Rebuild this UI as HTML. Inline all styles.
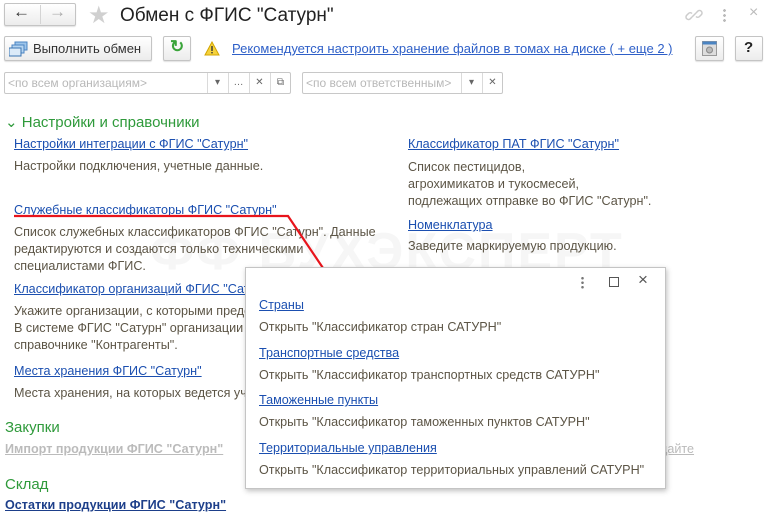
<!DOCTYPE html>
<html><head><meta charset="utf-8"><style>
*{margin:0;padding:0;box-sizing:border-box}
body{width:768px;height:518px;overflow:hidden;background:#fff;font-family:"Liberation Sans",Arial,sans-serif;position:relative;font-size:12.6px;color:#333}
.a{position:absolute;white-space:nowrap}
.lk{color:#1b4fb0;text-decoration:underline}
.d{color:#5c5546}
.g{color:#2f9a3b;font-size:15px}
.btn{position:absolute;border:1px solid #c4c4c4;border-radius:2px;background:linear-gradient(#fff,#ececec);box-shadow:0 1px 1px rgba(0,0,0,.12)}
.in{position:absolute;border:1px solid #c8c8c8;border-radius:2px;background:#fff;height:22px}
.ph{color:#b8b8b8;font-size:12px}
.cell{position:absolute;top:0;height:20px;border-left:1px solid #dadada;color:#666;font-size:10px;text-align:center;line-height:20px;width:20px}
</style></head><body>
<div class="a" style="left:150px;top:222px;font-size:52px;font-weight:bold;color:#f6f6f6;letter-spacing:2px">ФФ БУХЭКСПЕРТ</div>

<div class="btn" style="left:4px;top:3px;width:72px;height:23px"></div>
<div class="a" style="left:40px;top:5px;height:19px;border-left:1px solid #d4d4d4"></div>
<div class="a" style="left:13px;top:2px;font-size:17px;color:#333;font-weight:bold">&#8592;</div>
<div class="a" style="left:49px;top:2px;font-size:17px;color:#aaa;font-weight:bold">&#8594;</div>
<div class="a" style="left:88px;top:1px;font-size:24px;color:#d0d0d0">&#9733;</div>
<div class="a" style="left:120px;top:5px;font-size:19px;color:#222">Обмен с ФГИС "Сатурн"</div>
<svg class="a" style="left:684px;top:5px" width="20" height="20" viewBox="0 0 20 20"><g fill="none" stroke="#ccc" stroke-width="1.5"><path d="M8 12l-2 2a2.5 2.5 0 0 1-3.5-3.5l2-2a2.5 2.5 0 0 1 3.5 0"/><path d="M12 8l2-2a2.5 2.5 0 0 1 3.5 3.5l-2 2a2.5 2.5 0 0 1-3.5 0"/><path d="M8 12l4-4"/></g></svg>
<div class="a" style="left:723px;top:8px;width:3px;height:14px;background:radial-gradient(circle,#bbb 1.3px,transparent 1.5px) 0 0/3px 5px"></div>
<div class="a" style="left:749px;top:4px;font-size:16px;color:#bbb">×</div>

<div class="btn" style="left:4px;top:36px;width:148px;height:25px"></div>
<svg class="a" style="left:9px;top:41px" width="20" height="16"><rect x="6" y="1" width="12" height="8" fill="#9cc4ea" stroke="#4a84c2"/><rect x="3" y="4" width="12" height="8" fill="#b5d4f0" stroke="#4a84c2"/><rect x="0" y="7" width="12" height="8" fill="#dbeaf8" stroke="#3a74b2"/></svg>
<div class="a" style="left:33px;top:41px;font-size:13px;color:#333">Выполнить обмен</div>
<div class="btn" style="left:163px;top:36px;width:28px;height:25px"></div>
<div class="a" style="left:170px;top:37px;font-size:17px;color:#3aa43a;font-weight:bold">&#8635;</div>
<svg class="a" style="left:204px;top:41px" width="16" height="15"><path d="M8 1L15 14H1z" fill="#f5d23c" stroke="#d3a500"/><rect x="7.3" y="5" width="1.4" height="5" fill="#333"/><rect x="7.3" y="11" width="1.4" height="1.4" fill="#333"/></svg>
<div class="a lk" style="left:232px;top:41px;font-size:13px;color:#2f60c8">Рекомендуется настроить хранение файлов в томах на диске ( + еще 2 )</div>
<div class="btn" style="left:695px;top:36px;width:29px;height:25px"></div>
<svg class="a" style="left:702px;top:41px" width="15" height="15"><rect x="0.5" y="0.5" width="14" height="14" fill="#ddd" stroke="#999"/><rect x="0.5" y="0.5" width="14" height="3" fill="#4a84c2"/><circle cx="7.5" cy="9" r="3" fill="#bbb" stroke="#888"/></svg>
<div class="btn" style="left:735px;top:36px;width:28px;height:25px"></div>
<div class="a" style="left:744px;top:39px;font-size:15px;color:#222;font-weight:bold">?</div>

<div class="in" style="left:4px;top:72px;width:287px"><div class="a ph" style="left:3px;top:3px">&lt;по всем организациям&gt;</div>
<div class="cell" style="left:202px">▾</div><div class="cell" style="left:223px">…</div><div class="cell" style="left:244px">✕</div><div class="cell" style="left:265px">⧉</div></div>
<div class="in" style="left:302px;top:72px;width:201px"><div class="a ph" style="left:3px;top:3px">&lt;по всем ответственным&gt;</div>
<div class="cell" style="left:158px">▾</div><div class="cell" style="left:179px">✕</div></div>

<div class="a g" style="left:5px;top:113px">⌄ Настройки и справочники</div>
<div class="a lk" style="left:14px;top:137px">Настройки интеграции с ФГИС "Сатурн"</div>
<div class="a d" style="left:14px;top:159px">Настройки подключения, учетные данные.</div>
<div class="a lk" style="left:14px;top:203px">Служебные классификаторы ФГИС "Сатурн"</div>
<div class="a d" style="left:14px;top:224px;line-height:17px">Список служебных классификаторов ФГИС "Сатурн". Данные<br>редактируются и создаются только техническими<br>специалистами ФГИС.</div>
<div class="a lk" style="left:14px;top:282px">Классификатор организаций ФГИС "Сатурн"</div>
<div class="a d" style="left:14px;top:303px;line-height:17px">Укажите организации, с которыми предстоит работать.<br>В системе ФГИС "Сатурн" организации хранятся в<br>справочнике "Контрагенты".</div>
<div class="a lk" style="left:14px;top:364px">Места хранения ФГИС "Сатурн"</div>
<div class="a d" style="left:14px;top:386px">Места хранения, на которых ведется учет.</div>
<div class="a g" style="left:5px;top:419px">Закупки</div>
<div class="a" style="left:5px;top:442px;color:#bbb;text-decoration:underline;font-weight:bold">Импорт продукции ФГИС "Сатурн"</div>
<div class="a" style="left:660px;top:442px;color:#bbb;text-decoration:underline">дайте</div>
<div class="a g" style="left:5px;top:476px">Склад</div>
<div class="a" style="left:5px;top:498px;color:#1d3f8a;text-decoration:underline;font-weight:bold">Остатки продукции ФГИС "Сатурн"</div>

<div class="a lk" style="left:408px;top:137px">Классификатор ПАТ ФГИС "Сатурн"</div>
<div class="a d" style="left:408px;top:159px;line-height:17px">Список пестицидов,<br>агрохимикатов и тукосмесей,<br>подлежащих отправке во ФГИС "Сатурн".</div>
<div class="a lk" style="left:408px;top:218px">Номенклатура</div>
<div class="a d" style="left:408px;top:239px">Заведите маркируемую продукцию.</div>

<svg class="a" style="left:0;top:0;z-index:2" width="768" height="518"><path d="M14 216H288L323 268" fill="none" stroke="#e8141b" stroke-width="2.2"/></svg>

<div class="a" style="left:245px;top:267px;width:421px;height:222px;background:#fff;border:1px solid #c4c4c4;box-shadow:1px 2px 5px rgba(0,0,0,.25);z-index:3">
<div class="a" style="left:335px;top:8px;width:3px;height:13px;background:radial-gradient(circle,#777 1.2px,transparent 1.4px) 0 0/3px 4.5px"></div>
<div class="a" style="left:363px;top:9px;width:10px;height:10px;border:1.5px solid #555"></div>
<div class="a" style="left:392px;top:2px;font-size:17px;color:#555">×</div>
<div class="a lk" style="left:13px;top:30px">Страны</div>
<div class="a d" style="left:13px;top:52px">Открыть "Классификатор стран САТУРН"</div>
<div class="a lk" style="left:13px;top:78px">Транспортные средства</div>
<div class="a d" style="left:13px;top:100px">Открыть "Классификатор транспортных средств САТУРН"</div>
<div class="a lk" style="left:13px;top:125px">Таможенные пункты</div>
<div class="a d" style="left:13px;top:147px">Открыть "Классификатор таможенных пунктов САТУРН"</div>
<div class="a lk" style="left:13px;top:173px">Территориальные управления</div>
<div class="a d" style="left:13px;top:195px">Открыть "Классификатор территориальных управлений САТУРН"</div>
</div>
</body></html>
